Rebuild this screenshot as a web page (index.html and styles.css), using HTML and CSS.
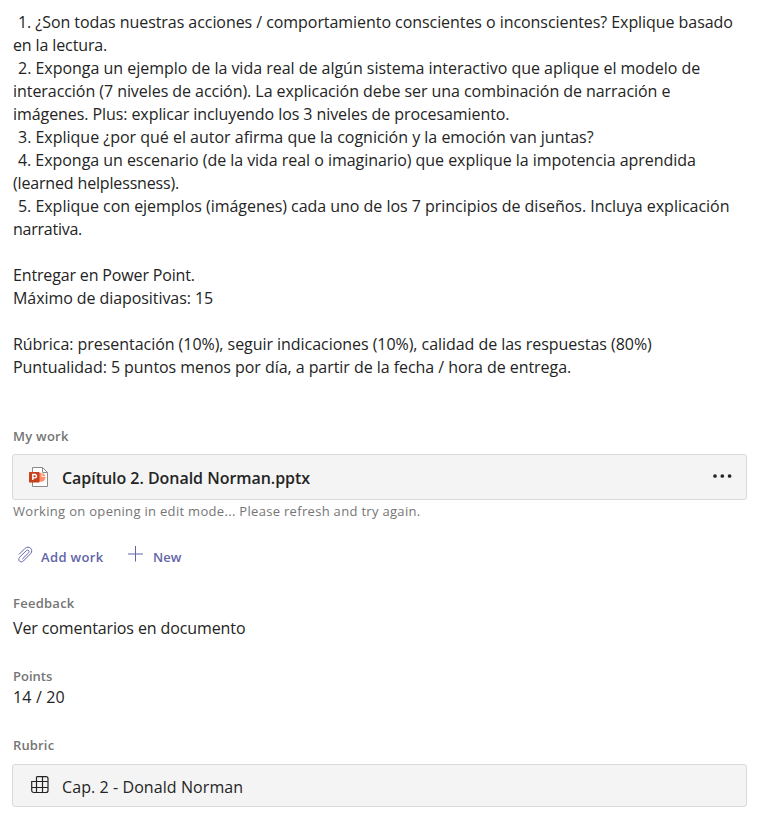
FILE: index.html
```html
<!DOCTYPE html>
<html lang="es">
<head>
<meta charset="utf-8">
<title>Capítulo 2</title>
<link rel="stylesheet" href="styles.css">
</head>
<body>
<main class="assignment">
  <section class="instructions">
    <p class="line l1 item">1. ¿Son todas nuestras acciones / comportamiento conscientes o inconscientes? Explique basado</p>
    <p class="line l2">en la lectura.</p>
    <p class="line l3 item">2. Exponga un ejemplo de la vida real de algún sistema interactivo que aplique el modelo de</p>
    <p class="line l4">interacción (7 niveles de acción). La explicación debe ser una combinación de narración e</p>
    <p class="line l5">imágenes. Plus: explicar incluyendo los 3 niveles de procesamiento.</p>
    <p class="line l6 item">3. Explique ¿por qué el autor afirma que la cognición y la emoción van juntas?</p>
    <p class="line l7 item">4. Exponga un escenario (de la vida real o imaginario) que explique la impotencia aprendida</p>
    <p class="line l8">(learned helplessness).</p>
    <p class="line l9 item">5. Explique con ejemplos (imágenes) cada uno de los 7 principios de diseños. Incluya explicación</p>
    <p class="line l10">narrativa.</p>
    <p class="line l11 gap">Entregar en Power Point.</p>
    <p class="line l12">Máximo de diapositivas: 15</p>
    <p class="line l13 gap">Rúbrica: presentación (10%), seguir indicaciones (10%), calidad de las respuestas (80%)</p>
    <p class="line l14">Puntualidad: 5 puntos menos por día, a partir de la fecha / hora de entrega.</p>
  </section>

  <section class="work">
    <h2 class="label">My work</h2>
    <div class="card file">
      <svg class="file-icon" width="20" height="22" viewBox="0 0 20 22">
        <path d="M3.500 1.500h10l5 5v14h-15z" fill="#fff" stroke="#8a8a8a"/>
        <path d="M13.500 1.500v5h5" fill="none" stroke="#8a8a8a"/>
        <circle cx="12" cy="11.200" r="4.500" fill="#ff8f6b"/>
        <path d="M13 6.500v4h4.500" fill="none" stroke="#fff" stroke-width=".8"/>
        <rect x="0" y="6" width="10.500" height="10.500" rx=".6" fill="#c8411f"/>
        <path d="M3.800 14V8.500h2a1.700 1.700 0 0 1 0 3.400h-2" fill="none" stroke="#fff" stroke-width="1.400"/>
      </svg>
      <span class="name">Capítulo 2. Donald Norman.pptx</span>
      <svg class="more" width="20" height="6" viewBox="0 0 20 6" fill="#242424">
        <circle cx="3" cy="3" r="1.850"/><circle cx="10.300" cy="3" r="1.850"/><circle cx="17.600" cy="3" r="1.850"/>
      </svg>
    </div>
    <p class="note">Working on opening in edit mode... Please refresh and try again.</p>
    <div class="actions">
      <span class="action add">
        <svg width="16" height="18" viewBox="0 0 16 18" fill="none" stroke="#6264a7" stroke-linecap="round">
          <path d="M1.200 8.200 7 2.400C11 -1 16 3.500 12.600 7.700L5.400 15C2.500 17.500 -.8 14 1.600 11.300L8.300 4.600C10 3.200 12 5 10.600 6.800L4.600 12.800"/>
        </svg>
        <span class="action-text">Add work</span>
      </span>
      <span class="action new">
        <svg width="16" height="18" viewBox="0 0 16 18" fill="none" stroke="#6264a7">
          <path d="M7.500 0v15.500"/><path d="M0 8h15" stroke-width="1"/>
        </svg>
        <span class="action-text">New</span>
      </span>
    </div>
  </section>

  <section class="feedback">
    <h2 class="label">Feedback</h2>
    <p class="line value comment">Ver comentarios en documento</p>
  </section>

  <section class="points">
    <h2 class="label">Points</h2>
    <p class="line value score">14 / 20</p>
  </section>

  <section class="rubric">
    <h2 class="label">Rubric</h2>
    <div class="card rubric-card">
      <svg class="grid-icon" width="18" height="18" viewBox="0 0 18 18" fill="none" stroke="#242424" stroke-width="1.200">
        <path d="M5.500 .7H15a2 2 0 0 1 2 2V14.500a2 2 0 0 1-2 2H2.700a2 2 0 0 1-2-2V5.500H17M.7 11.500H17M5.500 .7v15.800M11.500 .7v15.800"/>
      </svg>
      <span class="rubric-name">Cap. 2 - Donald Norman</span>
    </div>
  </section>
</main>
</body>
</html>
```
FILE: styles.css
```css
* { box-sizing: border-box; }
body {
  margin: 0;
  background: #fff;
  color: #242424;
  font-family: "Open Sans", "Noto Sans", sans-serif;
  font-size: 16px;
}
h2, p { margin: 0; }
.assignment { padding: 11px 18px 0 12px; }
.line { width: max-content; margin-left: 1px; line-height: 23px; white-space: nowrap; }
.item { padding-left: 5px; }
.gap { margin-top: 23px; }
.l1 { letter-spacing: -.06px; }
.l2 { letter-spacing: -.12px; }
.l3 { letter-spacing: -.02px; }
.l4 { letter-spacing: -.055px; }
.l5 { letter-spacing: -.075px; }
.l6 { letter-spacing: -.01px; }
.l7 { letter-spacing: -.045px; }
.l8 { letter-spacing: -.16px; }
.l9 { letter-spacing: -.03px; }
.l10 { letter-spacing: -.25px; }
.l11 { letter-spacing: -.15px; }
.l12 { letter-spacing: -.07px; }
.l13 { letter-spacing: -.045px; }
.l14 { letter-spacing: -.05px; }
.label {
  width: max-content;
  margin-left: 1px;
  font-size: 13px;
  font-weight: 600;
  line-height: 18px;
  letter-spacing: .25px;
  color: #757575;
}
.work { margin-top: 48px; }
.card {
  display: flex;
  align-items: center;
  background: #f4f4f4;
  border: 1px solid #d9d9d9;
  border-radius: 3px;
}
.file { height: 46px; margin-top: 9px; padding: 0 14px 0 16px; }
.name { margin-left: 13px; padding-top: 2px; font-weight: 600; letter-spacing: -.04px; white-space: nowrap; }
.more { margin: 0 0 2px auto; }
.note {
  width: max-content;
  margin: 2px 0 0 1px;
  font-size: 13px;
  line-height: 18px;
  letter-spacing: .31px;
  color: #757575;
}
.actions { display: flex; height: 20px; margin-top: 27px; padding-left: 6px; }
.action { display: flex; }
.action svg { margin-top: -1px; }
.action-text {
  margin-left: 8px;
  font-size: 13px;
  font-weight: 600;
  line-height: 20px;
  letter-spacing: .35px;
  color: #6264a7;
  white-space: nowrap;
}
.add { width: 110px; }
.add .action-text { margin-left: 7px; }
.new .action-text { margin-left: 9px; letter-spacing: .1px; }
.feedback { margin-top: 27px; }
.comment { margin-top: 5px; letter-spacing: -.11px; }
.points { margin-top: 27px; }
.points .label { letter-spacing: 0; }
.score { margin-top: 1px; letter-spacing: .15px; }
.rubric { margin-top: 27px; }
.rubric .label { letter-spacing: .15px; }
.rubric-card { height: 43px; margin-top: 10px; padding-left: 18px; }
.grid-icon { margin-bottom: 2px; }
.rubric-name { margin-left: 13px; padding-top: 3px; letter-spacing: .08px; }
```
